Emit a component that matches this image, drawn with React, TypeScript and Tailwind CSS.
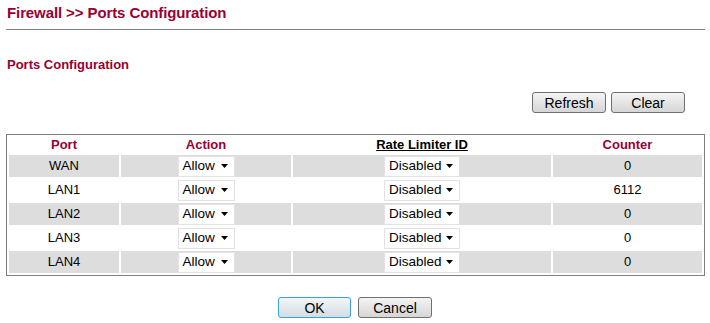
const rows = [
  { port: "WAN", counter: "0" },
  { port: "LAN1", counter: "6112" },
  { port: "LAN2", counter: "0" },
  { port: "LAN3", counter: "0" },
  { port: "LAN4", counter: "0" },
];

function FakeSelect({ value, width }: { value: string; width: string }) {
  return (
    <div
      className={`mx-auto flex h-[21px] items-center justify-between border border-[#e2e2e2] bg-white pl-[4px] pr-[6px] text-[13.5px] leading-none text-black ${width}`}
    >
      <span>{value}</span>
      <svg width="7" height="4" viewBox="0 0 7 4">
        <path d="M0 0h7L3.5 4z" fill="#000" />
      </svg>
    </div>
  );
}

function Btn({ label, primary }: { label: string; primary?: boolean }) {
  return (
    <button
      className={
        primary
          ? "h-[21px] w-[73px] rounded-[3px] border border-[#3c9fe0] bg-linear-to-b from-[#f3f6f8] to-[#d3dde4] text-[14px] leading-none text-black"
          : "h-[21px] w-[74px] rounded-[3px] border border-[#707070] bg-linear-to-b from-[#f4f4f4] to-[#d6d6d6] text-[14px] leading-none text-black"
      }
    >
      {label}
    </button>
  );
}

export default function App() {
  return (
    <div
      className="h-[323px] w-[710px] bg-white pl-[6px] pt-[4px] text-black"
      style={{ fontFamily: '"Liberation Sans", Arial, sans-serif' }}
    >
      <div className="w-[699px]">
        <div className="pl-[1px] text-[15px] font-bold leading-[18px] tracking-[-0.1px] text-[#990033]">
          Firewall &gt;&gt; Ports Configuration
        </div>
        <div className="mt-[7px] h-[1px] bg-[#808080]" />
        <div className="mt-[27px] pl-[1px] text-[13px] font-bold leading-[16px] text-[#990033]">
          Ports Configuration
        </div>
        <div className="mt-[19px] flex justify-end gap-[5px] pr-[20px]">
          <Btn label="Refresh" />
          <Btn label="Clear" />
        </div>
        <table className="mt-[21px] w-[699px] table-fixed border-separate border-spacing-[2px] border border-[#808080] text-[13px]">
          <thead>
            <tr className="h-[16px] font-bold leading-[16px]">
              <th className="w-[110px] p-0 text-[#990033]">Port</th>
              <th className="w-[170px] p-0 text-[#990033]">Action</th>
              <th className="w-[258px] p-0 text-black underline">Rate Limiter ID</th>
              <th className="p-0 text-[#990033]">Counter</th>
            </tr>
          </thead>
          <tbody>
            {rows.map((r, i) => {
              const bg = i % 2 === 0 ? "bg-[#dddddd]" : "bg-white";
              return (
                <tr key={r.port} className="h-[22px]">
                  <td className={`p-0 text-center ${bg}`}>{r.port}</td>
                  <td className={`p-0 ${bg}`}>
                    <FakeSelect value="Allow" width="w-[57px]" />
                  </td>
                  <td className={`p-0 ${bg}`}>
                    <FakeSelect value="Disabled" width="w-[76px]" />
                  </td>
                  <td className={`p-0 text-center ${bg}`}>{r.counter}</td>
                </tr>
              );
            })}
          </tbody>
        </table>
        <div className="mt-[21px] flex justify-center gap-[7px] pr-[1px]">
          <Btn label="OK" primary />
          <Btn label="Cancel" />
        </div>
      </div>
    </div>
  );
}
